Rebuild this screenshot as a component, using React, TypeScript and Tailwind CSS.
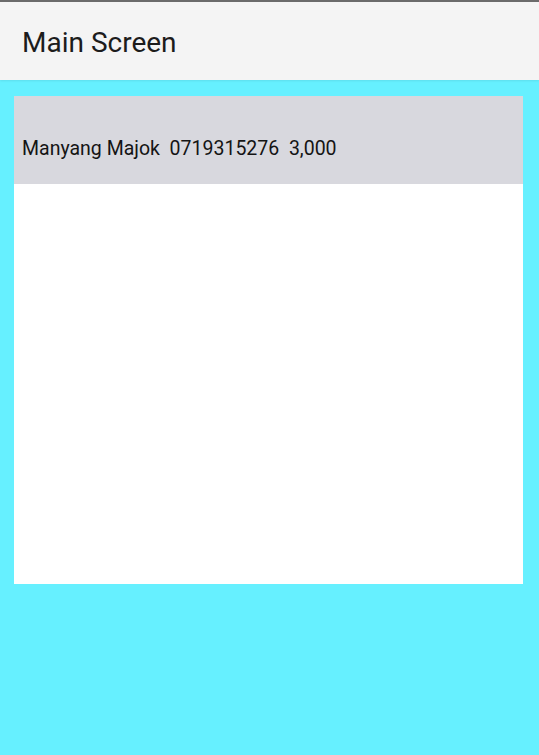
export default function App() {
  return (
    <div className="flex h-[755px] w-[539px] flex-col bg-[#66f0ff] font-['Roboto',sans-serif]">
      {/* App bar */}
      <header className="flex h-[80px] items-center border-t-2 border-[#6b6b6b] bg-[#f4f4f4] pl-[22px] pt-[4px] shadow-[0_1px_2px_rgba(0,0,0,0.08)]">
        <h1 className="text-[28px] leading-none text-[#1c1c1c]">Main Screen</h1>
      </header>

      {/* List */}
      <div className="ml-[14px] mr-[16px] mt-[16px] h-[488px] bg-white">
        <div className="flex h-[88px] items-center bg-[#d8d8de] pl-[8px] pt-[18px]">
          <span className="whitespace-pre text-[19.5px] leading-none text-[#141414]">
            Manyang Majok  0719315276  3,000
          </span>
        </div>
      </div>
    </div>
  );
}
